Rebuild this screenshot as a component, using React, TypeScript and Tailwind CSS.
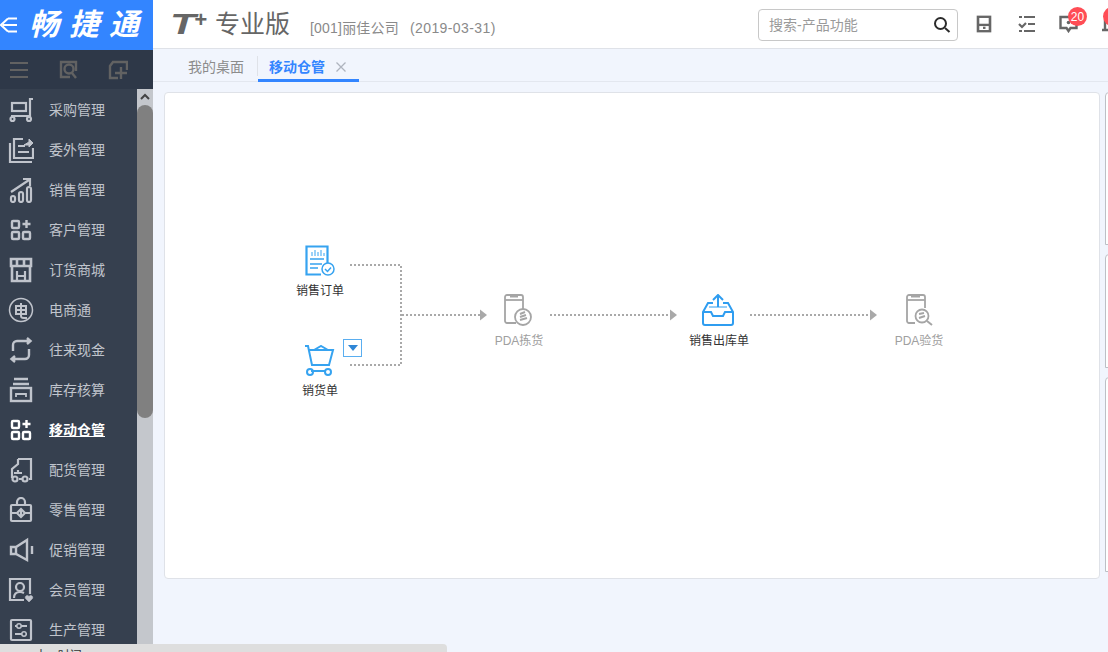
import React from "react";

const cjk = { fontFamily: '"Liberation Sans", "Noto Sans CJK SC", "Noto Sans", sans-serif' };

const S = ({ children, className, w = 26, h = 26, vb = "0 0 26 26", sw = 2.2 }: any) => (
  <svg width={w} height={h} viewBox={vb} fill="none" stroke="currentColor" strokeWidth={sw} className={className}>
    {children}
  </svg>
);

function Grid() {
  return (
    <S sw={2.4}>
      <rect x="4" y="4" width="7" height="7" rx="1" />
      <rect x="4" y="15" width="7" height="7" rx="1" />
      <rect x="15" y="15" width="7" height="7" rx="1" />
      <path d="M18.500 3v8M14.500 7h8" />
    </S>
  );
}

const menu: { label: string; icon: React.ReactNode; active?: boolean }[] = [
  {
    label: "采购管理",
    icon: (
      <S>
        <path d="M25 2h-3v17H3" />
        <rect x="4" y="6" width="14" height="8" />
        <circle cx="4.500" cy="22" r="2" />
        <circle cx="21" cy="22" r="2" />
      </S>
    ),
  },
  {
    label: "委外管理",
    icon: (
      <S>
        <path d="M2 6v19h22" />
        <path d="M15 2H6v19h19V11" />
        <path d="M10 9h7M10 15h11" />
        <path d="M16 8l5-3V2l4 4-4 4V8z" fill="currentColor" strokeWidth="1" />
      </S>
    ),
  },
  {
    label: "销售管理",
    icon: (
      <S>
        <path d="M3 15L21 3M15 2h7v7" />
        <rect x="3" y="19" width="4" height="6" rx="2" />
        <rect x="11" y="15" width="4" height="10" rx="2" />
        <rect x="19" y="10" width="4" height="15" rx="2" />
      </S>
    ),
  },
  { label: "客户管理", icon: <Grid /> },
  {
    label: "订货商城",
    icon: (
      <S>
        <path d="M3 2h20v7H3zM9 2v7M16 2v7" strokeWidth="2.600" />
        <path d="M4 9v15h18V9" strokeWidth="2.600" />
        <path d="M9 23v-9M17 23v-9M9 19h8" />
      </S>
    ),
  },
  {
    label: "电商通",
    icon: (
      <S sw={1.500}>
        <circle cx="13" cy="13" r="11.500" />
        <path d="M8 9h10v8H8zM8 13h10M13 6v13c0 2 1 2 6 2" strokeWidth="2" />
      </S>
    ),
  },
  {
    label: "往来现金",
    icon: (
      <S sw={2.400}>
        <path d="M5 14V8a4 4 0 0 1 4-4h13M19 1l3.500 3-3.500 3" />
        <path d="M21 12v6a4 4 0 0 1-4 4H4M7 19l-3.500 3L7 25" />
      </S>
    ),
  },
  {
    label: "库存核算",
    icon: (
      <S sw={2.400}>
        <path d="M6 2h14M5 7h16" />
        <rect x="3" y="11" width="20" height="13" />
        <path d="M8 20v-3h10v3" strokeWidth="1.800" />
      </S>
    ),
  },
  { label: "移动仓管", icon: <Grid />, active: true },
  {
    label: "配货管理",
    icon: (
      <S>
        <path d="M10 2h13v20h-2M14 22h-3M4 21v-9l6-5V2" />
        <path d="M10 13v4M6 16h8" />
        <circle cx="7" cy="22" r="2.500" />
        <circle cx="17" cy="22" r="2.500" />
      </S>
    ),
  },
  {
    label: "零售管理",
    icon: (
      <S>
        <rect x="3" y="8" width="20" height="16" rx="1" />
        <path d="M9 8V5a4 4 0 0 1 8 0v3" />
        <path d="M3 16h6M17 16h6M13 13v6" />
        <path d="M13 12l4 4-4 4-4-4z" />
      </S>
    ),
  },
  {
    label: "促销管理",
    icon: (
      <S sw={2.400}>
        <path d="M3 10h5l11-7v20L8 17H3z" />
        <path d="M8 10v7M24 9v8" />
      </S>
    ),
  },
  {
    label: "会员管理",
    icon: (
      <S>
        <path d="M22 17V2H2v21h14" />
        <circle cx="12" cy="10" r="4" />
        <path d="M6 21c0-5 3-6 6-6 2 0 3 .5 4 1" />
        <path d="M21 25l-3.500-3.500a2 2 0 0 1 3.500-2 2 2 0 0 1 3.500 2z" fill="currentColor" strokeWidth="0.500" />
      </S>
    ),
  },
  {
    label: "生产管理",
    icon: (
      <S>
        <rect x="3" y="3" width="20" height="20" rx="1" />
        <path d="M7 9h12M7 17h12" strokeWidth="1.800" />
        <circle cx="11" cy="9" r="2.200" fill="#36404f" strokeWidth="1.500" />
        <circle cx="16" cy="17" r="2.200" fill="#36404f" strokeWidth="1.500" />
      </S>
    ),
  },
];

const Flow = ({ className, label, grey, labelClass, children }: any) => (
  <div
    className={`absolute flex w-[80px] flex-col items-center text-xs leading-[16px] ${grey ? "text-[#a0a0a0]" : "text-[#333]"} ${className}`}
  >
    {children}
    <span className={`ml-[2px] whitespace-nowrap ${labelClass}`}>{label}</span>
  </div>
);

export default function App() {
  return (
    <div className="relative flex h-[652px] w-[1108px] overflow-hidden bg-[#f1f5fd]" style={cjk}>
      {/* Sidebar */}
      <aside className="flex w-[153px] shrink-0 flex-col">
        <div className="flex h-[50px] shrink-0 items-center bg-[#3385ff] text-white">
          <svg width="18" height="16" viewBox="0 0 18 16" fill="none" stroke="currentColor" strokeWidth="2" className="shrink-0">
            <path d="M8 1.500L1 8l7 6.500M8 1.500h9M8 14.500h9M3 8h14" />
          </svg>
          <span className="ml-[11px] whitespace-nowrap text-[30px] font-bold italic leading-none tracking-[10px]">畅捷通</span>
        </div>
        <div className="flex h-[39px] shrink-0 items-center bg-[#2e3848] text-[#626262]">
          <svg width="20" height="18" viewBox="0 0 20 18" stroke="currentColor" strokeWidth="2" className="ml-[9px]">
            <path d="M1 2h18M1 9h18M1 16h18" />
          </svg>
          <svg width="20" height="20" viewBox="0 0 20 20" fill="none" stroke="currentColor" strokeWidth="2.400" className="ml-[30px]">
            <path d="M11 2H2v15h9M11 2h6v9" />
            <circle cx="10" cy="9" r="4.500" />
            <path d="M13 13l4 5" />
          </svg>
          <svg width="20" height="20" viewBox="0 0 20 20" fill="none" stroke="currentColor" strokeWidth="2.400" className="ml-[29px]">
            <path d="M19 10V2H5L2 6v12h8" />
            <path d="M13 7v12M7 13h12" />
          </svg>
        </div>
        <div className="flex min-h-0 flex-1">
          <nav className="min-w-0 flex-1 overflow-hidden bg-[#36404f] pt-px">
            {menu.map((m) => (
              <div
                key={m.label}
                className={`flex h-10 items-center pl-[8px] ${m.active ? "text-white" : "text-[#c0c4cc]"}`}
              >
                <span className="flex h-[26px] w-[26px] shrink-0">{m.icon}</span>
                <span className={`ml-[15px] whitespace-nowrap text-sm ${m.active ? "font-bold underline" : ""}`}>{m.label}</span>
              </div>
            ))}
          </nav>
          <div className="flex w-4 shrink-0 flex-col items-center bg-[#c4c7cc]">
            <svg width="10" height="16" viewBox="0 0 10 16" fill="none" stroke="#444" strokeWidth="2" className="shrink-0">
              <path d="M1 10l4-4 4 4" />
            </svg>
            <div className="h-[313px] w-full rounded-[8px] bg-[#808080]" />
          </div>
        </div>
      </aside>

      {/* Main */}
      <div className="flex min-w-0 flex-1 flex-col">
        <header className="flex h-[49px] shrink-0 items-center border-b border-[#dfe2e8] bg-white">
          <span className="ml-[17px] flex w-[45px] shrink-0 items-start font-bold italic leading-none text-[#666]">
            <span className="inline-block w-[24px] origin-left scale-x-[1.4] text-[30px]">T</span>
            <span className="text-[22px]">+</span>
          </span>
          <span className="whitespace-nowrap text-[25px] leading-none text-[#666]">专业版</span>
          <span className="ml-[20px] mt-[7px] whitespace-nowrap text-sm leading-none tracking-[0.2px] text-[#8a8a8a]">[001]丽佳公司</span>
          <span className="ml-[11px] mt-[7px] whitespace-nowrap text-sm leading-none tracking-[0.4px] text-[#8a8a8a]">(2019-03-31)</span>

          <div className="ml-auto mt-px flex h-8 w-[200px] shrink-0 items-center rounded-[4px] border border-[#c8c8c8] pl-[10px] pr-[6px] text-sm text-[#9a9a9a]">
            <span className="whitespace-nowrap">搜索-产品功能</span>
            <svg width="18" height="18" viewBox="0 0 18 18" fill="none" stroke="#2b2b2b" strokeWidth="2" className="ml-auto">
              <circle cx="7.500" cy="7.500" r="5.500" />
              <path d="M12 12l4.500 4" />
            </svg>
          </div>
          <div className="flex w-[150px] shrink-0 items-center text-[#666]">
            <svg width="16" height="18" viewBox="0 0 16 20" preserveAspectRatio="none" fill="none" stroke="currentColor" strokeWidth="2.600" className="ml-[18px] shrink-0">
              <rect x="2" y="2" width="12" height="16" />
              <path d="M2 11h12" />
              <rect x="7" y="13" width="2.500" height="2.500" fill="currentColor" stroke="none" />
            </svg>
            <svg width="18" height="18" viewBox="0 0 18 18" fill="none" stroke="currentColor" strokeWidth="2.200" className="ml-[26px] shrink-0">
              <path d="M1 2h3M6 2h11M1 16h3M6 16h11M10 9h7M1 9l3 3 4-4" />
            </svg>
            <span className="relative ml-[23px] flex shrink-0">
              <svg width="19" height="18" viewBox="0 0 19 18" fill="none" stroke="currentColor" strokeWidth="2.400">
                <path d="M1.500 2h16v11h-6l-2 3-2-3h-6z" />
                <circle cx="9.500" cy="7.500" r="1.800" fill="currentColor" stroke="none" />
              </svg>
              <span className="absolute -top-[8px] left-[9px] flex h-[19px] w-[19px] items-center justify-center rounded-full bg-[#ff4d55] text-xs leading-none text-white">20</span>
            </span>
            <span className="relative ml-[23px] flex shrink-0">
              <svg width="20" height="18" viewBox="0 0 20 18" fill="none" stroke="currentColor" strokeWidth="2.400">
                <path d="M4 14V5a6 6 0 0 1 12 0v9M1 15h18" />
              </svg>
              <span className="absolute -top-[8px] left-[2px] flex h-[19px] w-[19px] items-center justify-center rounded-full bg-[#ff4d55] text-xs leading-none text-white">9</span>
            </span>
          </div>
        </header>

        <div className="flex h-[33px] shrink-0 items-end border-b border-[#e3e7ef] pl-[35px] text-sm">
          <div className="flex h-[32px] items-center whitespace-nowrap pr-[13px] pt-[4px] text-[#8c8c8c]">我的桌面</div>
          <div className="mb-[5px] h-[20px] w-px bg-[#dfe2e8]" />
          <div className="-mb-px flex h-[33px] w-[101px] items-start gap-[10px] whitespace-nowrap border-b-[3px] border-[#3385ff] pl-[11px] pt-[7px] font-bold leading-[22px] text-[#3385ff]">
            移动仓管
            <svg width="12" height="12" viewBox="0 0 12 12" stroke="#aeb4be" strokeWidth="1.300" className="mt-[5px]">
              <path d="M1.500 1.500l9 9M10.500 1.500l-9 9" />
            </svg>
          </div>
        </div>

        <div className="flex min-h-0 flex-1 items-start pl-[11px] pt-[10px]">
          {/* Diagram card */}
          <section className="relative h-[487px] w-[936px] shrink-0 rounded-[4px] border border-[#dfe2e8] bg-white">
            <svg width="936" height="487" className="absolute left-0 top-0" fill="none" stroke="#a9a9a9" strokeWidth="2" strokeDasharray="2 2">
              <path d="M185 172h51v100" />
              <path d="M185 272h51" />
              <path d="M237 222h78" />
              <path d="M385 222h122" />
              <path d="M585 222h122" />
              <path d="M315 216.500l7 5.500-7 5.500z" fill="#a9a9a9" stroke="none" />
              <path d="M505 216.500l7 5.500-7 5.500z" fill="#a9a9a9" stroke="none" />
              <path d="M705 216.500l7 5.500-7 5.500z" fill="#a9a9a9" stroke="none" />
            </svg>

            <Flow className="left-[114px] top-[152px]" label="销售订单" labelClass="mt-[6px]">
              <svg width="32" height="32" viewBox="0 0 32 32" fill="none" stroke="#36a3f0" strokeWidth="1.500">
                <path d="M23 1.500H3.500v28H18M23 1.500h1.500V18" strokeWidth="2.200" />
                <path d="M7 14h14M7 19h12M7 23h8" />
                <path d="M9 11V7M12 11V5M15 11V7M18 11V5M21 11V8" strokeWidth="1" />
                <circle cx="25" cy="24" r="6" fill="#fff" />
                <path d="M22 24l2.500 2.500 3.500-4" />
              </svg>
            </Flow>

            <Flow className="left-[114px] top-[252px]" label="销货单" labelClass="mt-[6px]">
              <svg width="32" height="32" viewBox="0 0 32 32" fill="none" stroke="#36a3f0" strokeWidth="2">
                <path d="M2 1h3l4 19h17l4-15H6" />
                <path d="M11 5l7-4 7 4" />
                <path d="M8 26h14" />
                <circle cx="7" cy="27" r="3" />
                <circle cx="25" cy="27" r="3" />
              </svg>
            </Flow>
            <div className="absolute left-[178px] top-[246px] flex h-[18px] w-[19px] items-center justify-center border border-[#5aaef0] bg-white">
              <svg width="10" height="6" viewBox="0 0 10 6" className="flex">
                <path d="M0 0h10L5 6z" fill="#2f86d6" />
              </svg>
            </div>

            <Flow grey className="left-[313px] top-[201px]" label="PDA拣货" labelClass="mt-[7px]">
              <svg width="32" height="32" viewBox="0 0 32 32" fill="none" stroke="#a5a5a5" strokeWidth="1.800">
                <path d="M14 29H5a2 2 0 0 1-2-2V3a2 2 0 0 1 2-2h14a2 2 0 0 1 2 2v13" />
                <path d="M3 6h18" />
                <path d="M8 2.500h8" strokeWidth="2" />
                <circle cx="21" cy="23" r="8" fill="#fff" />
                <path d="M18 20l5-2M18 23l6-2M18 26l7-2" strokeWidth="2" />
              </svg>
            </Flow>

            <Flow className="left-[513px] top-[201px]" label="销售出库单" labelClass="mt-[7px]">
              <svg width="32" height="32" viewBox="0 0 32 32" fill="none" stroke="#2f9df0" strokeWidth="2">
                <path d="M16 13V2M11 6l5-5 5 5" />
                <path d="M11 9H6l-5 9v11a2 2 0 0 0 2 2h26a2 2 0 0 0 2-2V18l-5-9h-5" />
                <path d="M1 18h8l2 4h10l2-4h8" />
                <path d="M7 13h18" strokeWidth="1" />
              </svg>
            </Flow>

            <Flow grey className="left-[713px] top-[201px]" label="PDA验货" labelClass="mt-[7px]">
              <svg width="32" height="32" viewBox="0 0 32 32" fill="none" stroke="#a5a5a5" strokeWidth="1.800">
                <path d="M13 29H7a2 2 0 0 1-2-2V3a2 2 0 0 1 2-2h14a2 2 0 0 1 2 2v11" />
                <path d="M5 6h18" />
                <path d="M9 2.500h9" strokeWidth="2" />
                <circle cx="20" cy="22" r="6.500" fill="#fff" />
                <path d="M25 27l5 4" strokeWidth="2" />
                <path d="M17 20l5-1M17 24l6-2" strokeWidth="2" />
              </svg>
            </Flow>
          </section>

          {/* Right panels */}
          <div className="ml-[5px] flex w-[40px] shrink-0 flex-col gap-[9px]">
            <div className="h-[153px] rounded-tl-[4px] border border-[#bcc0c6] bg-white" />
            <div className="h-[114px] rounded-tl-[4px] border border-[#bcc0c6] bg-white" />
            <div className="h-[195px] rounded-tl-[4px] border border-[#bcc0c6] bg-white" />
          </div>
        </div>
      </div>

      {/* Floating bottom strip */}
      <div className="absolute bottom-0 left-0 h-[8px] w-[447px] overflow-hidden rounded-tr-[4px] bg-[#dedede] pl-[35px] pt-[4px] text-xs leading-4 text-[#333]">
        本 · 时间
      </div>
    </div>
  );
}
